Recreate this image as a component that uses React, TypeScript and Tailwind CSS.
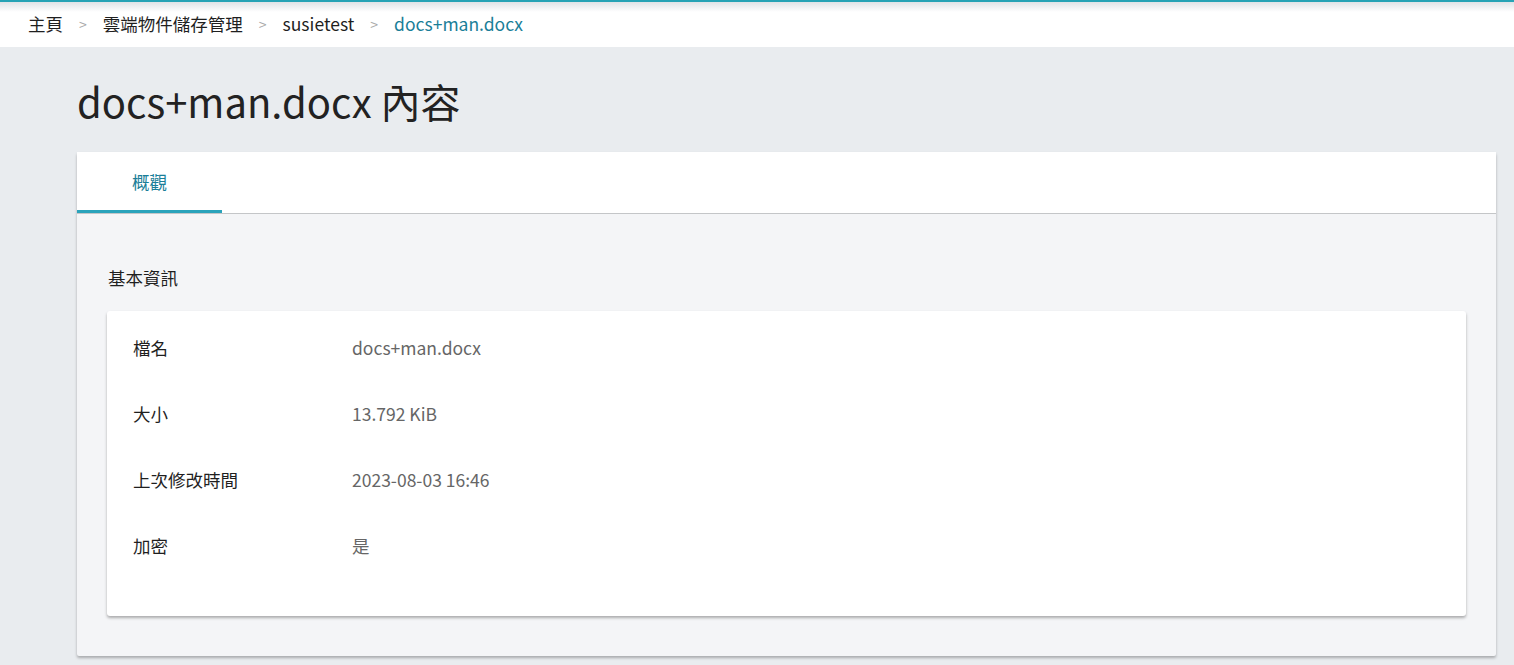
import React from 'react';

const font = { fontFamily: '"Noto Sans CJK TC", "Noto Sans", sans-serif' };

const crumbs = ['主頁', '雲端物件儲存管理', 'susietest'];

const rows: [string, string][] = [
  ['檔名', 'docs+man.docx'],
  ['大小', '13.792 KiB'],
  ['上次修改時間', '2023-08-03 16:46'],
  ['加密', '是'],
];

export default function App() {
  return (
    <div className="min-h-[665px] bg-[#e9ecef] text-[#1f1f1f]" style={font}>
      {/* top bar */}
      <div className="relative h-[47px] bg-white border-t-[2px] border-[#27a3b5]">
        <div className="absolute left-0 right-0 top-0 h-[10px] bg-gradient-to-b from-[#e0e3e6] to-white" />
        <nav className="relative flex h-full items-center pl-[28px] text-[17.5px]">
          {crumbs.map(c => (
            <React.Fragment key={c}>
              <span>{c}</span>
              <span className="mx-[16px] text-[14px] text-[#a8a8a8]">&gt;</span>
            </React.Fragment>
          ))}
          <span className="text-[#1a7e98]">docs+man.docx</span>
        </nav>
      </div>

      <div className="ml-[77px] mr-[18px]">
        <h1 className="pt-[29px] pb-[26px] text-[40px] leading-[50px] text-[#222]">docs+man.docx 內容</h1>

        <div className="bg-[#f4f5f7] rounded-[2px] shadow-[0_2px_3px_rgba(0,0,0,0.28)]">
          <div className="flex h-[62px] bg-white border-b border-[#c4c6c8]">
            <div className="flex w-[145px] items-center justify-center border-b-[3px] border-[#2aa3bb] pt-[3px] text-[17.5px] text-[#1a7e98]">
              概觀
            </div>
          </div>

          <div className="px-[30px] pt-[52px] pb-[40px]">
            <h2 className="pl-[1px] text-[17.5px] leading-[24px]">基本資訊</h2>
            <div className="mt-[21px] bg-white rounded-[3px] shadow-[0_2px_3px_rgba(0,0,0,0.3)] pl-[26px] pt-[4px] pb-[37px]">
              {rows.map(([k, v]) => (
                <div key={k} className="flex h-[66px] items-center text-[17.5px]">
                  <div className="w-[219px]">{k}</div>
                  <div className="text-[#666]">{v}</div>
                </div>
              ))}
            </div>
          </div>
        </div>
      </div>
    </div>
  );
}
